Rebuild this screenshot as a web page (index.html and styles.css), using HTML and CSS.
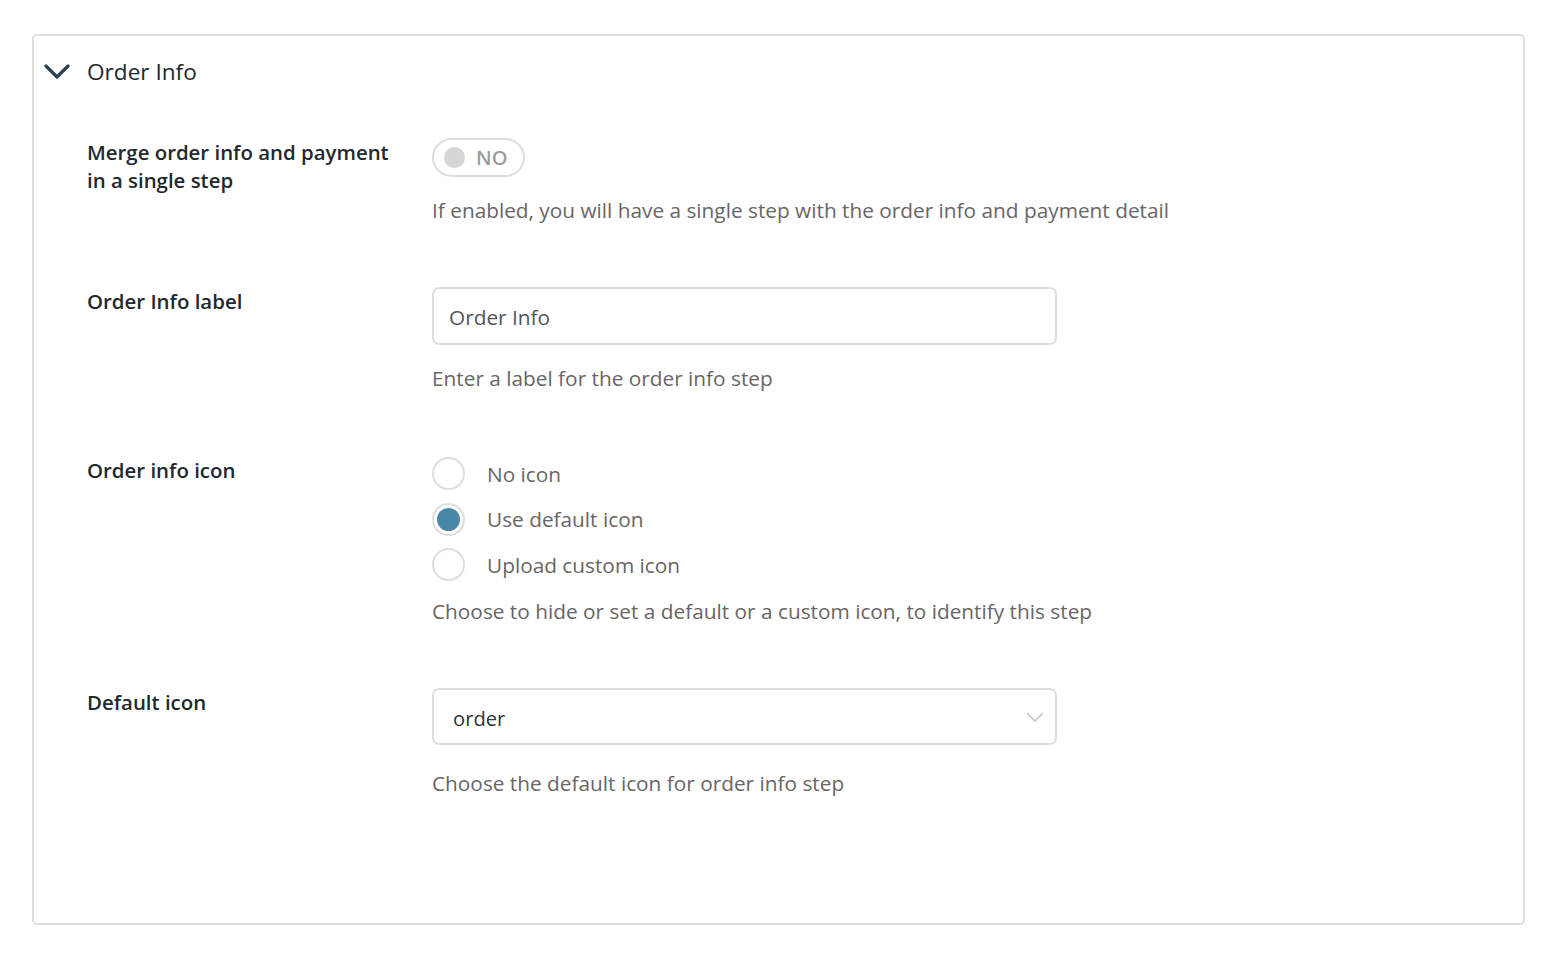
FILE: index.html
```html
<!DOCTYPE html>
<html lang="en">
<head>
<meta charset="utf-8">
<title>Order Info</title>
<link rel="stylesheet" href="styles.css">
</head>
<body>
<section class="panel">
  <header class="panel-head">
    <svg class="chev" width="26" height="16" viewBox="0 0 26 16"><path d="M2 2 L13 13 L24 2" fill="none" stroke="#2d4250" stroke-width="3.2" stroke-linecap="round" stroke-linejoin="round"/></svg>
    <h2 class="panel-title">Order Info</h2>
  </header>
  <div class="panel-body">
    <div class="row row-merge">
      <div class="label">Merge order info and payment in a single step</div>
      <div class="control">
        <div class="toggle"><span class="knob"></span><span class="toggle-text">NO</span></div>
        <p class="help">If enabled, you will have a single step with the order info and payment detail</p>
      </div>
    </div>
    <div class="row row-label">
      <div class="label">Order Info label</div>
      <div class="control">
        <div class="input">Order Info</div>
        <p class="help">Enter a label for the order info step</p>
      </div>
    </div>
    <div class="row row-icon">
      <div class="label">Order info icon</div>
      <div class="control">
        <ul class="radios">
          <li class="radio"><span class="dot"></span><span>No icon</span></li>
          <li class="radio checked"><span class="dot"></span><span>Use default icon</span></li>
          <li class="radio"><span class="dot"></span><span>Upload custom icon</span></li>
        </ul>
        <p class="help help-radios">Choose to hide or set a default or a custom icon, to identify this step</p>
      </div>
    </div>
    <div class="row row-default">
      <div class="label">Default icon</div>
      <div class="control">
        <div class="select"><span>order</span>
          <svg class="sel-chev" width="20" height="12" viewBox="0 0 20 12"><path d="M2 2 L10 10 L18 2" fill="none" stroke="#c8c8c8" stroke-width="1.6"/></svg>
        </div>
        <p class="help help-select">Choose the default icon for order info step</p>
      </div>
    </div>
  </div>
</section>
</body>
</html>
```
FILE: styles.css
```css
* { box-sizing: border-box; }
html, body { margin: 0; padding: 0; background: #fff; }
body {
  font-family: "Open Sans", "Noto Sans", sans-serif;
  font-size: 20.8px;
  color: #23282d;
  padding: 34px 36px 38px 32px;
}
.panel {
  border: 2px solid #dedede;
  border-radius: 5px;
  height: 891px;
}
.panel-head {
  display: flex;
  align-items: center;
  height: 71px;
  padding-left: 10px;
}
.chev { display: block; margin-right: 17px; margin-top: 1px; }
.panel-title {
  margin: 0;
  font-size: 22.6px;
  font-weight: 500;
  color: #23282d;
  line-height: 28px;
}
.panel-body { padding: 31px 0 0 53px; }
.row {
  display: grid;
  grid-template-columns: 345px 625px;
  margin-bottom: 63px;
}
.label {
  font-size: 20.4px;
  font-weight: 600;
  line-height: 28px;
  padding-top: 0;
  width: 312px;
  color: #23282d;
}
.control { display: flex; flex-direction: column; align-items: flex-start; }
.help {
  margin: 19px 0 0;
  line-height: 28px;
  color: #6b6565;
  white-space: nowrap;
}
.toggle {
  width: 93px;
  height: 39px;
  border: 2px solid #dedede;
  border-radius: 20px;
  display: flex;
  align-items: center;
  padding-left: 10px;
}
.knob {
  width: 21px;
  height: 21px;
  border-radius: 50%;
  background: #d6d6d6;
}
.toggle-text {
  margin-left: 11px;
  font-size: 20px;
  font-weight: 600;
  color: #9c9c9c;
}
.input, .select {
  width: 625px;
  height: 58px;
  border: 2px solid #dedede;
  border-radius: 7px;
  display: flex;
  align-items: center;
  color: #555;
  padding-top: 2px;
}
.input { padding-left: 15px; }
.select { padding-left: 19px; height: 57px; justify-content: space-between; padding-right: 10px; color: #333; font-size: 20.2px; padding-top: 3px; }
.sel-chev { margin-top: -1px; }
.row-icon .label { padding-top: 1px; }
.radios { list-style: none; margin: -4px 0 0; padding: 0; }
.radio {
  display: flex;
  align-items: center;
  height: 45.5px;
  color: #6b6565;
}
.dot {
  width: 33px;
  height: 33px;
  border-radius: 50%;
  border: 2px solid #dedede;
  margin-right: 22px;
  display: flex;
  align-items: center;
  justify-content: center;
}
.radio.checked .dot::after {
  content: "";
  width: 23px;
  height: 23px;
  border-radius: 50%;
  background: #4a87a6;
}
.help-radios { margin-top: 9px; }
.help-select { margin-top: 24px; }
```
